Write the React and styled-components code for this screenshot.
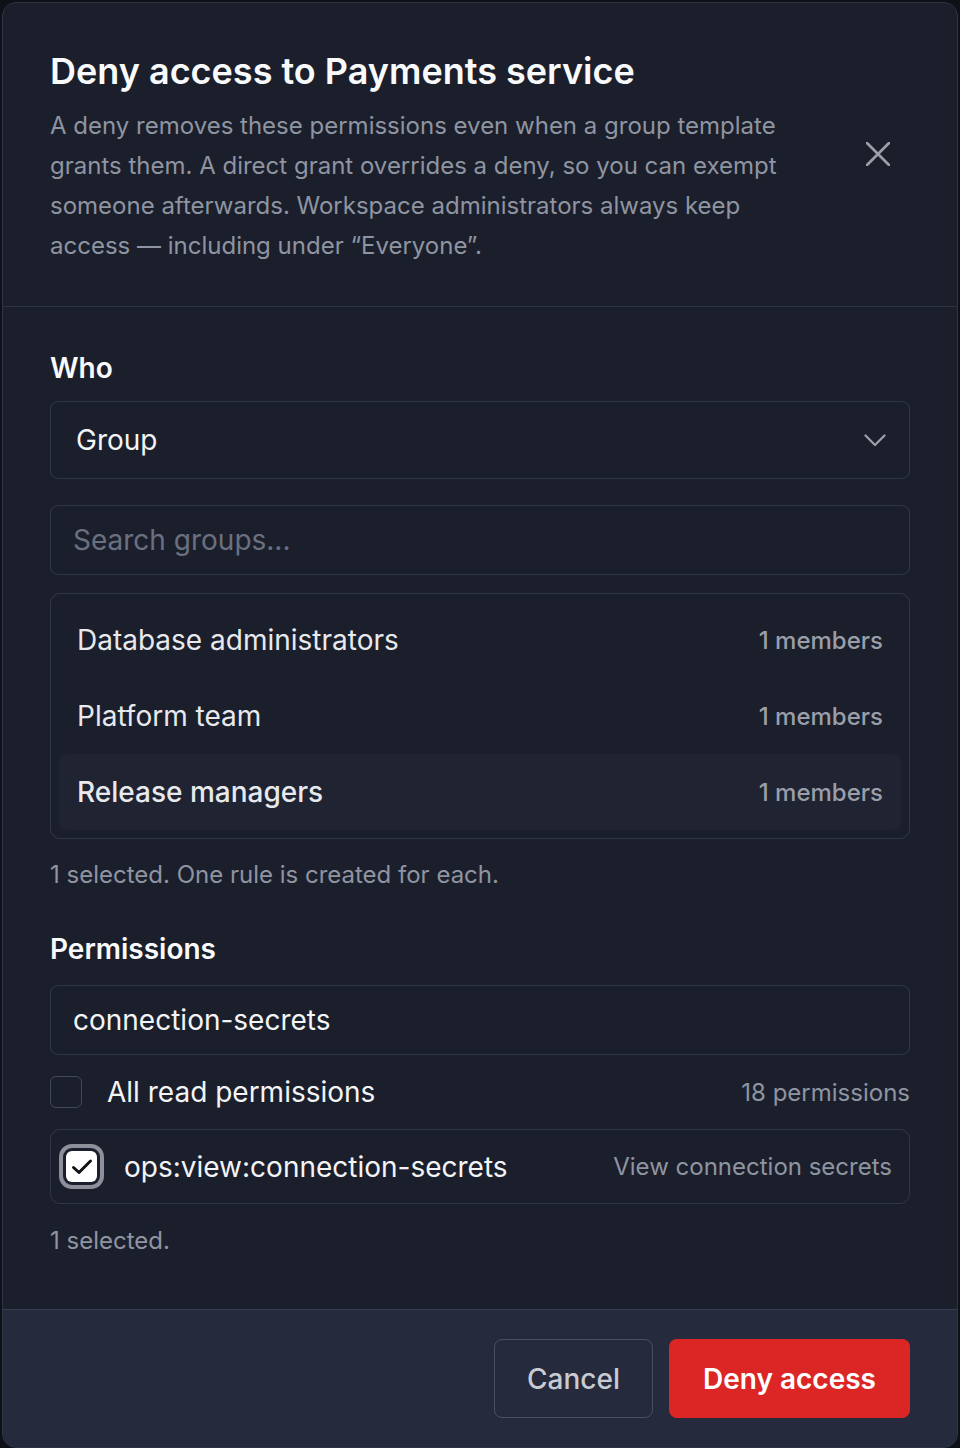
import React from "react";
import styled, { createGlobalStyle, css } from "styled-components";

const GlobalStyle = createGlobalStyle`
  html, body {
    margin: 0;
    padding: 0;
    background: #0e1118;
  }
  body {
    font-family: Inter, "Noto Sans", "Liberation Sans", sans-serif;
    -webkit-font-smoothing: antialiased;
  }
  * {
    box-sizing: border-box;
  }
`;

const Backdrop = styled.div`
  padding: 2px;
  min-height: 1448px;
`;

const Dialog = styled.div`
  width: 956px;
  background: #1b1f2c;
  border: 1px solid #2f3444;
  border-radius: 14px;
  overflow: hidden;
  color: #f3f4f6;
`;

const Header = styled.div`
  display: flex;
  align-items: center;
  gap: 32px;
  padding: 46px 47px 40px;
  border-bottom: 1px solid #2f3444;
`;

const HeaderText = styled.div`
  flex: 1;
  min-width: 0;
`;

const Title = styled.h2`
  margin: 0 0 13px;
  font-size: 36px;
  line-height: 44px;
  font-weight: 600;
  color: #f9fafb;
`;

const Description = styled.p`
  margin: 0;
  font-size: 24px;
  line-height: 40px;
  color: #8f94a1;
`;

const CloseButton = styled.button`
  width: 40px;
  height: 40px;
  margin: 0 12px 8px 0;
  flex: none;
  display: flex;
  align-items: center;
  justify-content: center;
  padding: 0;
  border: none;
  background: none;
  color: #9ca0ab;
  cursor: pointer;
`;

const Body = styled.div`
  padding: 41px 47px 52px;
`;

const Label = styled.div`
  font-size: 28px;
  line-height: 40px;
  font-weight: 600;
  color: #f9fafb;
  margin: ${(p) => p.$top || 0}px 0 ${(p) => p.$bottom || 0}px;
`;

const Select = styled.div`
  height: 78px;
  display: flex;
  align-items: center;
  justify-content: space-between;
  padding: 0 23px 0 25px;
  border: 1px solid #323747;
  border-radius: 8px;
  font-size: 28px;
  color: #9ca0ab;

  span {
    color: #f3f4f6;
  }
`;

const TextInput = styled.input`
  display: block;
  width: 100%;
  height: 70px;
  margin-top: ${(p) => p.$top || 0}px;
  padding: 0 22px;
  border: 1px solid #323747;
  border-radius: 8px;
  background: transparent;
  font-family: inherit;
  font-size: 28px;
  color: #f3f4f6;
  outline: none;

  &::placeholder {
    color: #6b7080;
  }
`;

const GroupList = styled.div`
  margin-top: 18px;
  padding: 8px;
  border: 1px solid #323747;
  border-radius: 10px;
`;

const GroupRow = styled.div`
  height: 76px;
  display: flex;
  align-items: center;
  justify-content: space-between;
  padding: 0 18px;
  border-radius: 8px;
  font-size: 28px;
  color: #e8e9ed;

  ${(p) =>
    p.$active &&
    css`
      background: #1f2332;
      font-weight: 500;
    `}
`;

const Count = styled.span`
  font-size: 24px;
  font-weight: 500;
  color: #9a9ea9;
`;

const Hint = styled.div`
  margin-top: ${(p) => p.$top || 0}px;
  font-size: 24px;
  line-height: 32px;
  color: #8f94a1;
`;

const CheckRow = styled.label`
  display: flex;
  align-items: center;
  margin-top: 21px;
  font-size: 28px;
  color: #f3f4f6;

  ${(p) =>
    p.$boxed
      ? css`
          height: 75px;
          padding: 0 17px 0 15px;
          border: 1px solid #323747;
          border-radius: 10px;
        `
      : css`
          height: 32px;
        `}
`;

const Box = styled.span`
  flex: none;
  display: flex;
  align-items: center;
  justify-content: center;
  border-radius: 6px;

  ${(p) =>
    p.$checked
      ? css`
          width: 31px;
          height: 31px;
          background: #ffffff;
          box-shadow: 0 0 0 3px #1b1f2c, 0 0 0 7px #8d909a;
          margin-right: 27px;
        `
      : css`
          width: 32px;
          height: 32px;
          border: 1px solid #444958;
          margin-right: 25px;
        `}
`;

const RowName = styled.span`
  flex: 1;
`;

const RowMeta = styled.span`
  font-size: 24px;
  color: #8f94a1;
`;

const Footer = styled.div`
  display: flex;
  justify-content: flex-end;
  gap: 16px;
  padding: 29px 47px 29px;
  background: #252a3c;
  border-top: 1px solid #3a3f51;
`;

const Button = styled.button`
  height: 79px;
  padding: 0 32px;
  border-radius: 8px;
  font-family: inherit;
  font-size: 28px;
  cursor: pointer;

  ${(p) =>
    p.$danger
      ? css`
          border: none;
          background: #dc2626;
          color: #ffffff;
          font-weight: 600;
          padding: 0 34px;
        `
      : css`
          border: 1px solid #4a4f60;
          background: transparent;
          color: #c9cbd2;
          font-weight: 500;
        `}
`;

const groups = [
  { name: "Database administrators", members: 1 },
  { name: "Platform team", members: 1 },
  { name: "Release managers", members: 1, active: true },
];

function CloseIcon() {
  return (
    <svg width="24" height="24" viewBox="0 0 24 24" fill="none">
      <path d="M1 1L23 23M23 1L1 23" stroke="currentColor" strokeWidth="2.6" strokeLinecap="round" />
    </svg>
  );
}

function Chevron() {
  return (
    <svg width="22" height="13" viewBox="0 0 22 13" fill="none">
      <path d="M1.5 1.5L11 11L20.5 1.5" stroke="currentColor" strokeWidth="2.2" strokeLinecap="round" strokeLinejoin="round" />
    </svg>
  );
}

function Check() {
  return (
    <svg width="22" height="18" viewBox="0 0 22 18" fill="none">
      <path d="M2.5 9.5L8 14.5L19.5 3" stroke="#111318" strokeWidth="3" strokeLinecap="round" strokeLinejoin="round" />
    </svg>
  );
}

export default function App() {
  return (
    <Backdrop>
      <GlobalStyle />
      <Dialog>
        <Header>
          <HeaderText>
            <Title>Deny access to Payments service</Title>
            <Description>
              A deny removes these permissions even when a group template grants them. A direct grant
              overrides a deny, so you can exempt someone afterwards. Workspace administrators always
              keep access — including under “Everyone”.
            </Description>
          </HeaderText>
          <CloseButton aria-label="Close">
            <CloseIcon />
          </CloseButton>
        </Header>

        <Body>
          <Label $bottom={13}>Who</Label>
          <Select>
            <span>Group</span>
            <Chevron />
          </Select>
          <TextInput $top={26} placeholder="Search groups..." readOnly />
          <GroupList>
            {groups.map((g) => (
              <GroupRow key={g.name} $active={g.active}>
                {g.name}
                <Count>{g.members} members</Count>
              </GroupRow>
            ))}
          </GroupList>
          <Hint $top={20}>1 selected. One rule is created for each.</Hint>

          <Label $top={38} $bottom={16}>Permissions</Label>
          <TextInput value="connection-secrets" readOnly />
          <CheckRow>
            <Box />
            <RowName>All read permissions</RowName>
            <RowMeta>18 permissions</RowMeta>
          </CheckRow>
          <CheckRow $boxed>
            <Box $checked>
              <Check />
            </Box>
            <RowName>ops:view:connection-secrets</RowName>
            <RowMeta>View connection secrets</RowMeta>
          </CheckRow>
          <Hint $top={21}>1 selected.</Hint>
        </Body>

        <Footer>
          <Button>Cancel</Button>
          <Button $danger>Deny access</Button>
        </Footer>
      </Dialog>
    </Backdrop>
  );
}
